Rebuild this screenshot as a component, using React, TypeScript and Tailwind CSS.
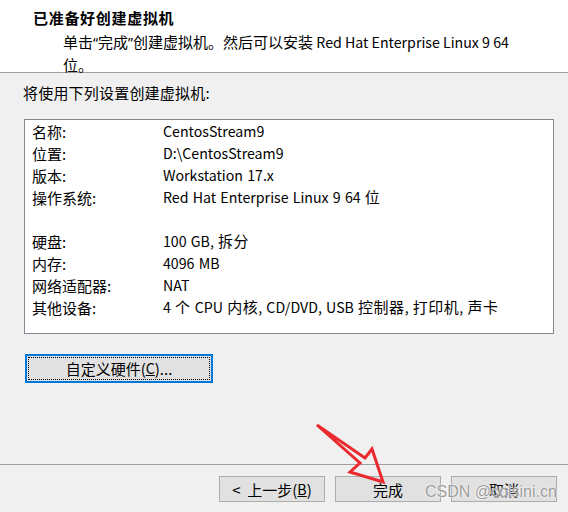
import React from 'react';

type Row = { label: string; value: string } | null;

// summary rows shown in the settings box; null leaves an empty line
const rows: Row[] = [
  { label: '名称:', value: 'CentosStream9' },
  { label: '位置:', value: 'D:\\CentosStream9' },
  { label: '版本:', value: 'Workstation 17.x' },
  { label: '操作系统:', value: 'Red Hat Enterprise Linux 9 64 位' },
  null,
  { label: '硬盘:', value: '100 GB, 拆分' },
  { label: '内存:', value: '4096 MB' },
  { label: '网络适配器:', value: 'NAT' },
  { label: '其他设备:', value: '4 个 CPU 内核, CD/DVD, USB 控制器, 打印机, 声卡' },
];

const font = "font-['Noto_Sans_CJK_SC','Noto_Sans',sans-serif]";
const cjk = /[\u3000-\u9fff\uff00-\uffef]/;

// Latin runs are set a touch smaller so they sit like the system UI font
const Mixed: React.FC<{ text: string }> = ({ text }) => {
  const parts = text.split(/([\u3000-\u9fff\uff00-\uffef]+)/).filter(Boolean);
  return (
    <>
      {parts.map((p, i) =>
        cjk.test(p) ? (
          <span key={i} className="tracking-[0.5px]">{p}</span>
        ) : (
          <span key={i} className="text-[14.2px] [word-spacing:1px]">{p}</span>
        )
      )}
    </>
  );
};

const WizardButton: React.FC<{ children: React.ReactNode }> = ({ children }) => (
  <button className="w-[106px] h-[26px] bg-[#e1e1e1] border border-[#adadad] text-[15px] leading-none flex items-center justify-center">
    {children}
  </button>
);

const App: React.FC = () => {
  return (
    <div className={`relative w-[568px] h-[512px] overflow-hidden bg-[#f0f0f0] text-black text-[15px] flex flex-col ${font}`}>
      {/* Header */}
      <header className="h-[73px] shrink-0 bg-white border-b border-[#a0a0a0] pl-[33px] pt-[7px]">
        <h1 className="font-bold text-[15px] leading-[22px] tracking-[0.7px]">已准备好创建虚拟机</h1>
        <p className="pl-[30px] leading-[22px] mt-[2px]">
          单击<span className="font-['Noto_Sans',sans-serif] text-[14px]">“</span>完成
          <span className="font-['Noto_Sans',sans-serif] text-[14px]">”</span>创建虚拟机。然后可以安装
          <span className="text-[14.2px]"> Red Hat Enterprise Linux 9 64</span>
          <br />
          位。
        </p>
      </header>

      {/* Body */}
      <main className="flex-1 pl-[24px] pr-[14px]">
        <p className="pt-[9px] -ml-[1px] leading-[22px] tracking-[0.2px]">将使用下列设置创建虚拟机:</p>
        <div className="mt-[15px] h-[215px] bg-white border border-[#828790] pl-[7px]">
          {rows.map((row, i) =>
            row ? (
              <div key={i} className="h-[22px] flex items-center leading-none">
                <span className="w-[131px] shrink-0">{row.label}</span>
                <span className="whitespace-pre">
                  <Mixed text={row.value} />
                </span>
              </div>
            ) : (
              <div key={i} className="h-[22px]" />
            )
          )}
        </div>
        <button className="mt-[20px] ml-[1px] w-[188px] h-[29px] border-2 border-[#0078d7] bg-[#e1e1e1] p-[1px] flex">
          <span className="flex-1 border border-dotted border-black flex items-center justify-center text-[15px] leading-none">
            自定义硬件(<span className="underline text-[14.2px]">C</span>)...
          </span>
        </button>
      </main>

      {/* Footer */}
      <footer className="h-[48px] shrink-0 border-t border-[#a0a0a0] flex justify-end gap-[10px] pt-[11px] pr-[11px]">
        <WizardButton>
          <span className="whitespace-pre">&lt;  </span>上一步(<span className="underline text-[14.2px]">B</span>)
        </WizardButton>
        <WizardButton>完成</WizardButton>
        <WizardButton>取消</WizardButton>
      </footer>

      {/* Annotation arrow */}
      <svg className="absolute inset-0 pointer-events-none" width="568" height="512" viewBox="0 0 568 512">
        <polygon
          points="317,425 365,458 372,449 383,482 350,472 360,463"
          fill="none"
          stroke="#ea2a2f"
          strokeWidth="3"
          strokeLinejoin="miter"
        />
      </svg>

      {/* Watermark */}
      <span className="absolute left-[425px] top-[484px] text-[16px] leading-none font-['Liberation_Sans',sans-serif] text-[#8f8f8f]/90 [text-shadow:0_0_2px_#ffffff,0_0_1px_#ffffff]">
        CSDN @colsini.cn
      </span>
    </div>
  );
};

export default App;
